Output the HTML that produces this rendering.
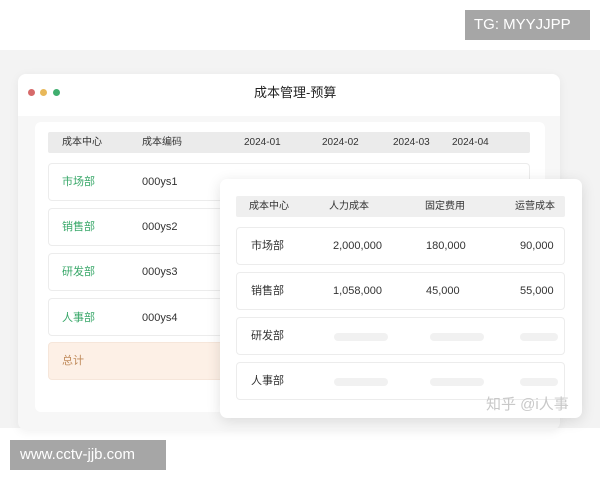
<!DOCTYPE html>
<html><head><meta charset="utf-8"><style>
*{margin:0;padding:0;box-sizing:border-box}
body{width:600px;height:480px;background:#fff;position:relative;overflow:hidden;font-family:"Liberation Sans","Noto Sans CJK SC",sans-serif;font-size:11px;color:#333}
.a{position:absolute}
.row{position:absolute;background:#fff;border:1px solid #ececec;border-radius:4px}
.hd{position:absolute;background:#ebebeb;border-radius:2px}
.t{position:absolute;white-space:nowrap;line-height:13px}
.g{color:#3aa86a}
.sk{position:absolute;height:8px;background:#f1f1f1;border-radius:4px}
</style></head><body>
<div class="a" style="left:0;top:50px;width:600px;height:378px;background:#f3f3f3"></div>
<div class="a" style="left:18px;top:74px;width:542px;height:356px;background:#f7f7f7;border-radius:8px;box-shadow:0 2px 10px rgba(0,0,0,.06)"></div>
<div class="a" style="left:18px;top:74px;width:542px;height:42px;background:#fff;border-radius:8px 8px 0 0"></div>
<div class="a" style="left:28px;top:89px;width:7px;height:7px;border-radius:50%;background:#d66a6a"></div>
<div class="a" style="left:40px;top:89px;width:7px;height:7px;border-radius:50%;background:#e8b85a"></div>
<div class="a" style="left:53px;top:89px;width:7px;height:7px;border-radius:50%;background:#3fae6e"></div>
<div class="t" style="left:254px;top:85px;font-size:13px;line-height:15px;color:#222">成本管理-预算</div>
<div class="a" style="left:35px;top:122px;width:510px;height:290px;background:#fff;border-radius:6px"></div>
<div class="hd" style="left:48px;top:132px;width:482px;height:21px"></div>
<div class="t" style="left:62px;top:136px;font-size:10px">成本中心</div>
<div class="t" style="left:142px;top:136px;font-size:10px">成本编码</div>
<div class="t" style="left:244px;top:136px;font-size:10px">2024-01</div>
<div class="t" style="left:322px;top:136px;font-size:10px">2024-02</div>
<div class="t" style="left:393px;top:136px;font-size:10px">2024-03</div>
<div class="t" style="left:452px;top:136px;font-size:10px">2024-04</div>
<div class="row" style="left:48px;top:163px;width:482px;height:38px"></div>
<div class="row" style="left:48px;top:208px;width:482px;height:38px"></div>
<div class="row" style="left:48px;top:253px;width:482px;height:38px"></div>
<div class="row" style="left:48px;top:298px;width:482px;height:38px"></div>
<div class="row" style="left:48px;top:342px;width:482px;height:38px;background:#fdf0e6;border-color:#f6e6da"></div>
<div class="t g" style="left:62px;top:176px">市场部</div><div class="t" style="left:142px;top:176px">000ys1</div>
<div class="t g" style="left:62px;top:221px">销售部</div><div class="t" style="left:142px;top:221px">000ys2</div>
<div class="t g" style="left:62px;top:266px">研发部</div><div class="t" style="left:142px;top:266px">000ys3</div>
<div class="t g" style="left:62px;top:312px">人事部</div><div class="t" style="left:142px;top:312px">000ys4</div>
<div class="t" style="left:62px;top:355px;color:#c08a5a">总计</div>
<div class="a" style="left:220px;top:179px;width:362px;height:239px;background:#fff;border-radius:7px;box-shadow:0 3px 14px rgba(0,0,0,.12)"></div>
<div class="hd" style="left:236px;top:196px;width:329px;height:21px;background:#efefef"></div>
<div class="t" style="left:249px;top:200px;font-size:10px">成本中心</div>
<div class="t" style="left:329px;top:200px;font-size:10px">人力成本</div>
<div class="t" style="left:425px;top:200px;font-size:10px">固定费用</div>
<div class="t" style="left:515px;top:200px;font-size:10px">运营成本</div>
<div class="row" style="left:236px;top:227px;width:329px;height:38px"></div>
<div class="row" style="left:236px;top:272px;width:329px;height:38px"></div>
<div class="row" style="left:236px;top:317px;width:329px;height:38px"></div>
<div class="row" style="left:236px;top:362px;width:329px;height:38px"></div>
<div class="t" style="left:251px;top:240px">市场部</div><div class="t" style="left:333px;top:240px">2,000,000</div><div class="t" style="left:426px;top:240px">180,000</div><div class="t" style="left:520px;top:240px">90,000</div>
<div class="t" style="left:251px;top:285px">销售部</div><div class="t" style="left:333px;top:285px">1,058,000</div><div class="t" style="left:426px;top:285px">45,000</div><div class="t" style="left:520px;top:285px">55,000</div>
<div class="t" style="left:251px;top:330px">研发部</div>
<div class="sk" style="left:334px;top:333px;width:54px"></div><div class="sk" style="left:430px;top:333px;width:54px"></div><div class="sk" style="left:520px;top:333px;width:38px"></div>
<div class="t" style="left:251px;top:375px">人事部</div>
<div class="sk" style="left:334px;top:378px;width:54px"></div><div class="sk" style="left:430px;top:378px;width:54px"></div><div class="sk" style="left:520px;top:378px;width:38px"></div>
<div class="t" style="left:486px;top:396px;font-size:15px;line-height:17px;color:#c8c8c8">知乎 @i人事</div>
<div class="a" style="left:465px;top:10px;width:125px;height:30px;background:#a6a6a6"></div>
<div class="t" style="left:474px;top:16px;font-size:15px;line-height:17px;color:#fff">TG: MYYJJPP</div>
<div class="a" style="left:10px;top:440px;width:156px;height:30px;background:#a6a6a6"></div>
<div class="t" style="left:20px;top:446px;font-size:15px;line-height:17px;color:#fff">www.cctv-jjb.com</div>
</body></html>
